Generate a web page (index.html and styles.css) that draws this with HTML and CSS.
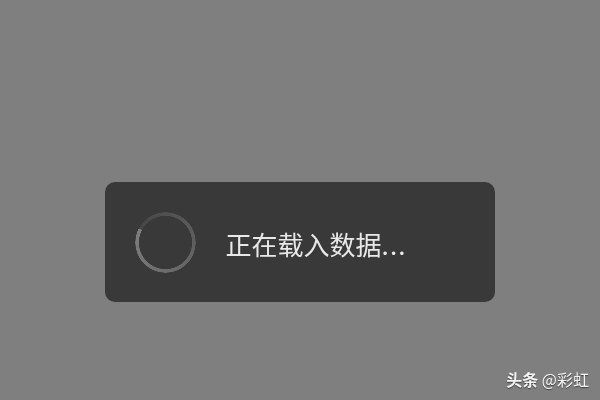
FILE: index.html
```html
<!DOCTYPE html>
<html lang="zh">
<head>
<meta charset="utf-8">
<title>正在载入数据</title>
<link rel="stylesheet" href="styles.css">
</head>
<body>
<main class="stage">
  <div class="toast">
    <div class="spinner"></div>
    <div class="message">正在载入数据<span class="dots">...</span></div>
  </div>
  <div class="watermark"><span class="brand">头条</span> <span class="author">@彩虹</span></div>
</main>
</body>
</html>
```
FILE: styles.css
```css
html, body {
  margin: 0;
  padding: 0;
}
.stage {
  position: relative;
  box-sizing: border-box;
  width: 600px;
  height: 400px;
  overflow: hidden;
  padding-top: 182px;
  background: #7f7f7f;
  font-family: "Noto Sans CJK SC", "Noto Sans", sans-serif;
}
.toast {
  display: flex;
  align-items: center;
  gap: 30px;
  box-sizing: border-box;
  width: 390px;
  height: 120px;
  margin: 0 auto;
  padding: 1px 0 0 29.5px;
  border-radius: 10px;
  background: #393939;
  filter: blur(0.7px);
}
.spinner {
  flex: none;
  width: 61px;
  height: 61px;
  border-radius: 50%;
  background: conic-gradient(from 298deg, #454545 0deg, #5a5a5a 120deg, #6c6c6c 240deg, #7e7e7e 360deg);
  -webkit-mask: radial-gradient(circle closest-side, transparent 26.3px, #000 26.9px, #000 30px, transparent 30.5px);
  mask: radial-gradient(circle closest-side, transparent 26.3px, #000 26.9px, #000 30px, transparent 30.5px);
}
.message {
  margin-top: 3px;
  color: #e8e8e8;
  font-size: 26px;
  font-weight: 400;
  line-height: 36px;
  white-space: nowrap;
}
.dots {
  letter-spacing: 1.2px;
}
.watermark {
  position: absolute;
  right: 11px;
  bottom: 10px;
  color: #f4f4f4;
  font-size: 16px;
  line-height: 22px;
  white-space: nowrap;
  text-shadow: 0 1px 1px rgba(0, 0, 0, 0.5);
  filter: blur(0.3px);
}
.brand {
  font-weight: 700;
}
.author {
  font-weight: 400;
}
```
